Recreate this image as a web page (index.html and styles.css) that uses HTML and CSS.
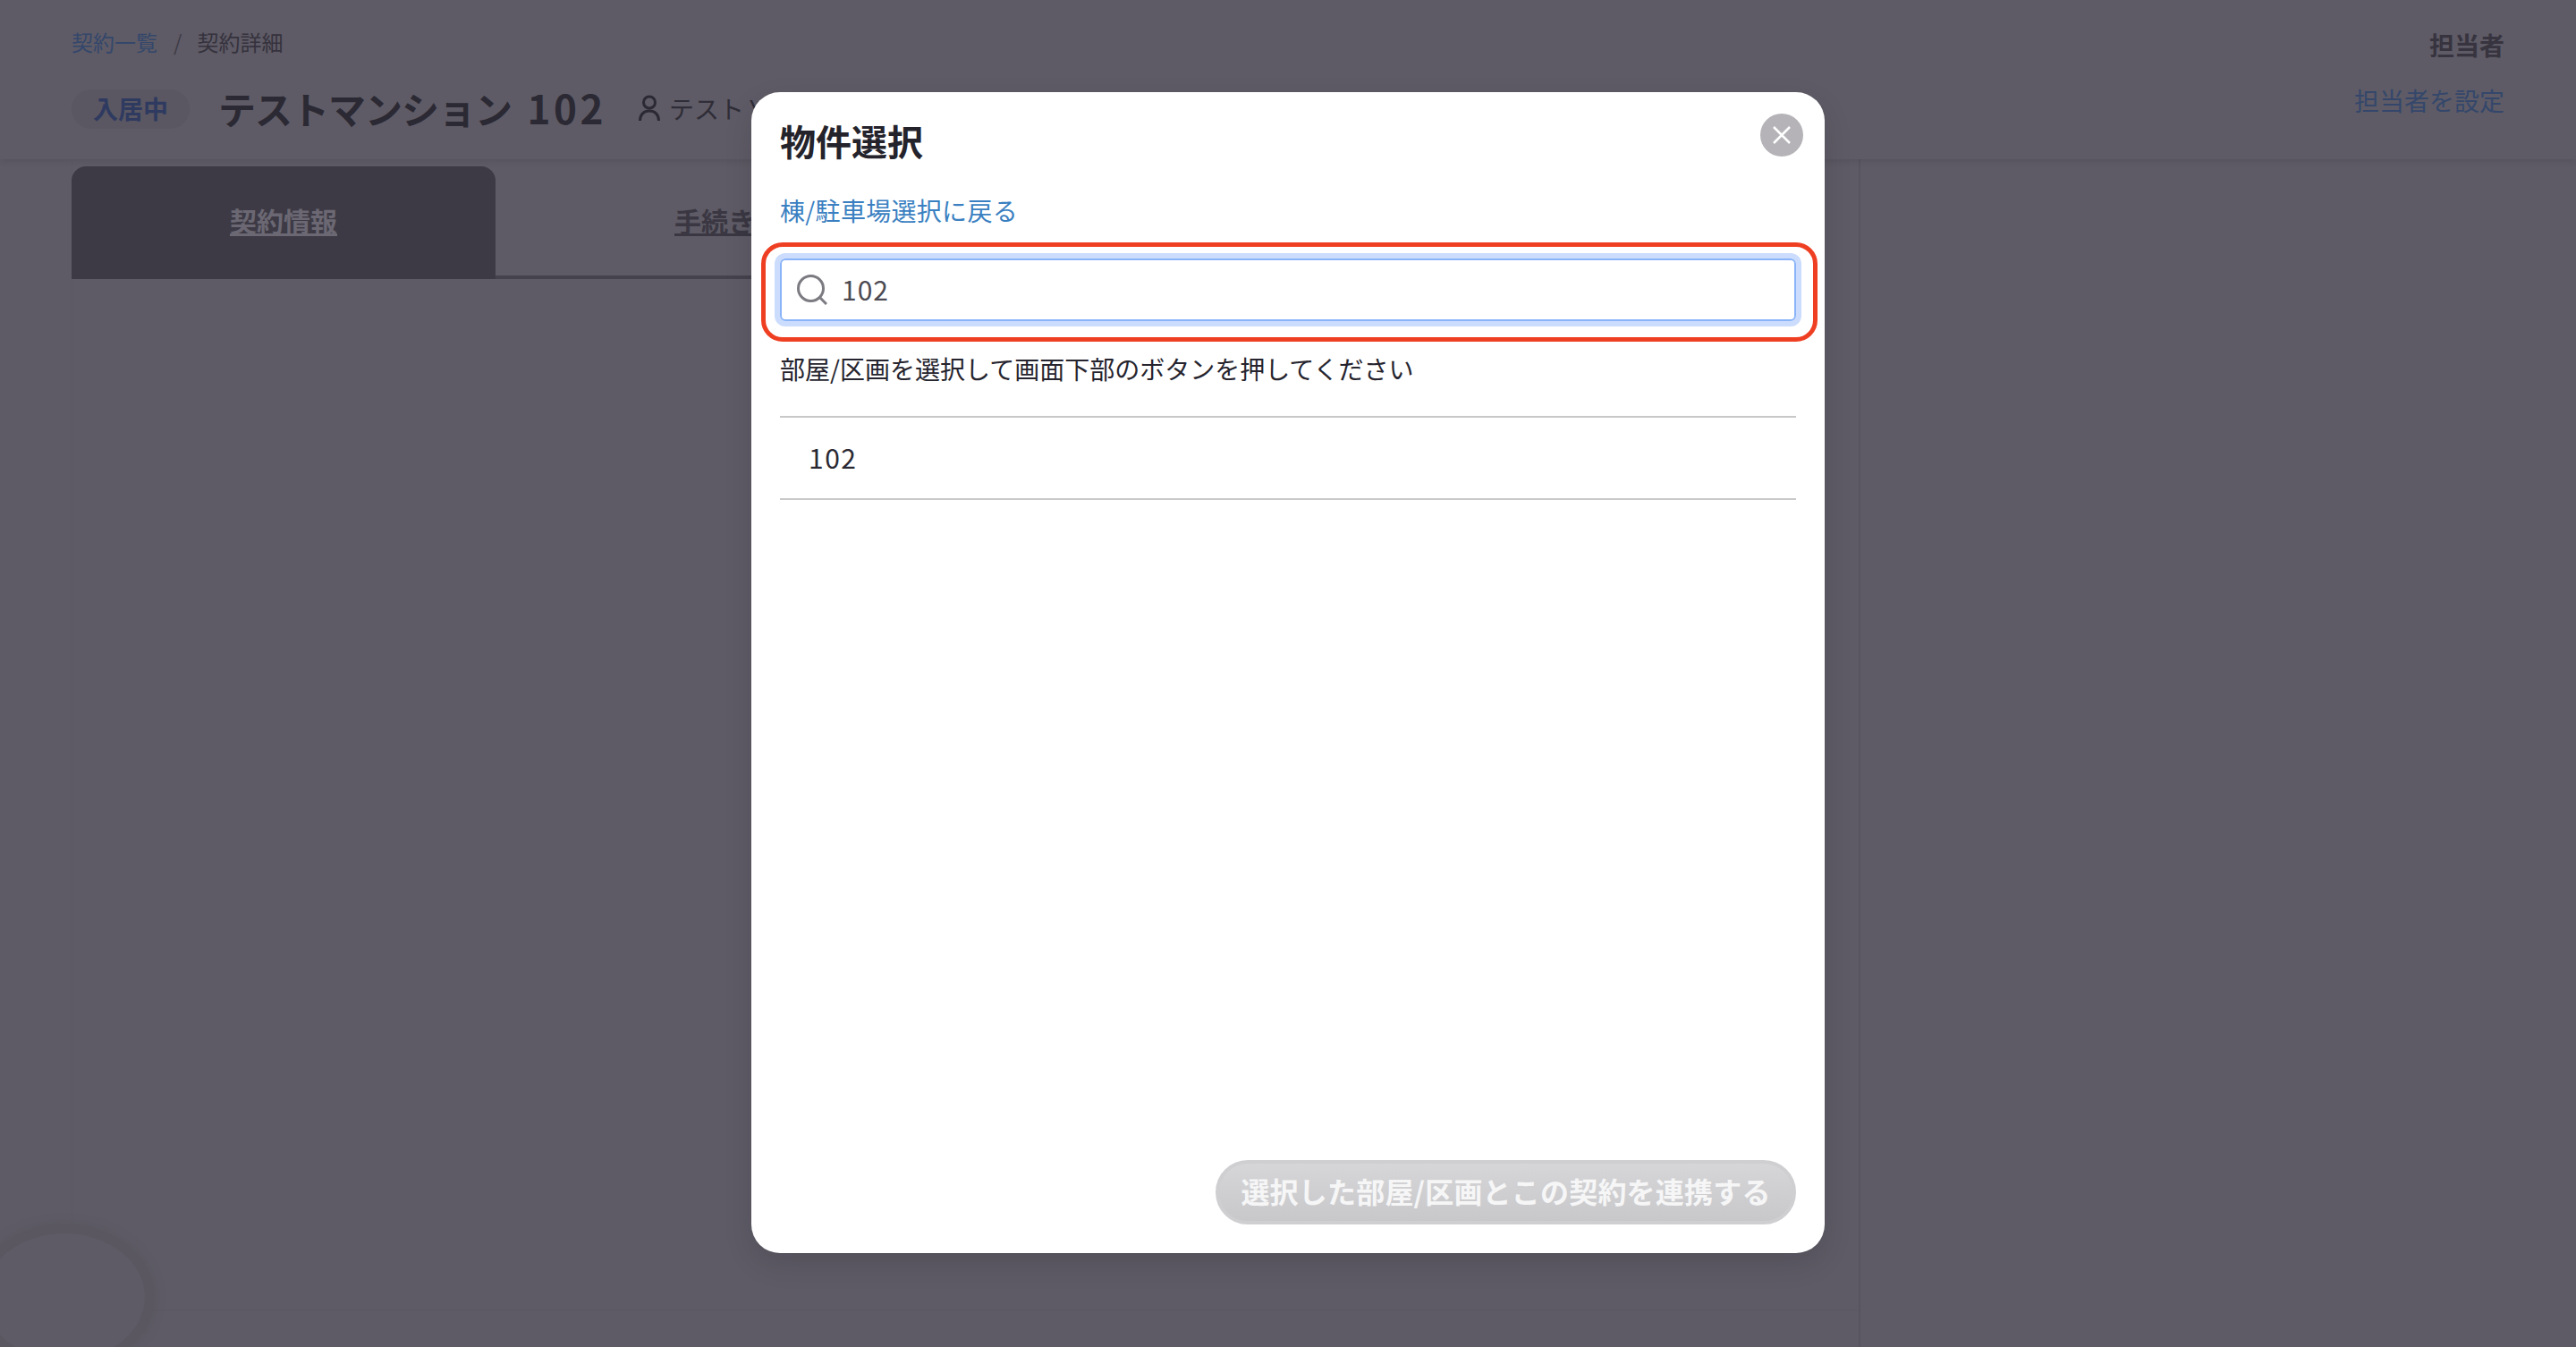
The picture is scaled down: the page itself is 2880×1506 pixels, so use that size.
FILE: index.html
```html
<!DOCTYPE html>
<html lang="ja">
<head>
<meta charset="utf-8">
<title>物件選択</title>
<link rel="stylesheet" href="styles.css">
</head>
<body>
<div class="page">
  <header class="head">
    <div class="head-main">
      <nav class="crumbs"><a class="crumb-link">契約一覧</a><span class="crumb-sep">/</span><span>契約詳細</span></nav>
      <div class="title-row">
        <span class="badge">入居中</span>
        <h1 class="title">テストマンション <span class="title-num">102</span></h1>
        <span class="tenant">
          <svg class="tenant-icon" viewBox="0 0 24 30" aria-hidden="true"><circle cx="12" cy="8.5" r="6.5"/><path d="M1.5 29c0-7 4.5-11 10.500-11s10.500 4 10.500 11"/></svg>
          テスト Y
        </span>
      </div>
    </div>
    <div class="assignee">
      <strong class="assignee-label">担当者</strong>
      <a class="assignee-link">担当者を設定</a>
    </div>
  </header>
  <div class="body">
    <div class="panel">
      <div class="tabs">
        <a class="tab tab-active">契約情報</a>
        <a class="tab">手続き</a>
      </div>
      <div class="panel-fill"></div>
    </div>
  </div>
  <div class="fab"></div>
</div>

<section class="modal">
  <button class="close" aria-label="閉じる">
    <svg viewBox="0 0 20 20" aria-hidden="true"><path d="M1 1l18 18M19 1L1 19"/></svg>
  </button>
  <h2 class="modal-title">物件選択</h2>
  <a class="back">棟/駐車場選択に戻る</a>
  <div class="search">
    <svg class="search-icon" viewBox="0 0 34 34" aria-hidden="true"><circle cx="15.500" cy="15.500" r="14"/><path d="M25.500 25.500L33 33"/></svg>
    <span class="search-value">102</span>
    <span class="highlight"></span>
  </div>
  <p class="hint">部屋/区画を選択して画面下部のボタンを押してください</p>
  <ul class="rooms"><li class="room">102</li></ul>
  <button class="submit">選択した部屋/区画とこの契約を連携する</button>
</section>
</body>
</html>
```

FILE: styles.css
```css
* { box-sizing: border-box; }
html, body { margin: 0; height: 100%; }
body {
  width: 2880px;
  height: 1506px;
  overflow: hidden;
  background: #5e5b66;
  color: #26242e;
  font-family: "Noto Sans CJK JP", "Noto Sans", sans-serif;
  position: relative;
}
.page { display: flex; flex-direction: column; height: 1506px; position: relative; }
.head {
  height: 178px;
  padding: 0 80px;
  display: flex;
  justify-content: space-between;
  box-shadow: 0 3px 6px rgba(40, 38, 46, .12);
  position: relative;
  z-index: 1;
}
.crumbs {
  display: flex;
  align-items: center;
  height: 36px;
  margin-top: 29px;
  font-size: 24px;
  line-height: 36px;
  color: #35323d;
}
.crumb-link { color: #34476b; }
.crumb-sep { margin: 0 17px 0 18px; color: #3f3c47; }
.title-row { display: flex; align-items: center; height: 44px; margin-top: 35px; }
.badge {
  width: 132px;
  height: 44px;
  border-radius: 22px;
  background: #5a5762;
  color: #2f3a60;
  font-size: 28px;
  font-weight: 700;
  line-height: 42px;
  text-align: center;
}
.title {
  margin: 0 0 0 32px;
  padding-bottom: 3px;
  font-size: 42px;
  font-weight: 700;
  line-height: 41px;
  color: #2b2933;
  letter-spacing: -1px;
  white-space: nowrap;
}
.title-num { margin-left: 9px; font-size: 44px; letter-spacing: 3.5px; }
.tenant {
  display: flex;
  align-items: center;
  margin-left: 36px;
  padding-bottom: 2px;
  font-size: 28px;
  color: #2f2d37;
  white-space: nowrap;
}
.tenant-icon {
  width: 24px;
  height: 30px;
  margin-right: 10px;
  fill: none;
  stroke: #2b2933;
  stroke-width: 3;
}
.assignee { display: flex; flex-direction: column; align-items: flex-end; padding-top: 30px; font-size: 28px; line-height: 40px; }
.assignee-label { color: #37343f; font-weight: 700; }
.assignee-link { margin-top: 22px; color: #34476b; }
.body { flex: 1; display: flex; padding-left: 80px; }
.panel {
  width: 2000px;
  display: flex;
  flex-direction: column;
  padding-top: 8px;
  border-left: 1px solid #5c5964;
  border-right: 2px solid #57545f;
}
.tabs {
  display: flex;
  gap: 8px;
  width: 1500px;
  height: 126px;
  border-bottom: 4px solid #45424d;
  margin-left: -1px;
}
.tab {
  width: 474px;
  height: 122px;
  display: flex;
  align-items: center;
  justify-content: center;
  border-radius: 16px 16px 0 0;
  padding-bottom: 3px;
  font-size: 30px;
  font-weight: 700;
  text-decoration: underline;
  color: #3a3742;
}
.tab-active { height: 126px; background: #3d3a45; color: #6b6873; padding-bottom: 7px; }
.panel-fill {
  height: 1154px;
  flex: none;
  border-bottom: 2px solid #5c5964;
}
.fab {
  position: absolute;
  left: -18px;
  top: 1379px;
  width: 180px;
  height: 142px;
  border-radius: 50%;
  background: #5e5b66;
  box-shadow: 0 0 0 10px #5a5760, 0 0 10px 12px rgba(86, 83, 90, .5);
}
.modal {
  position: absolute;
  z-index: 2;
  left: 840px;
  top: 103px;
  width: 1200px;
  height: 1298px;
  padding: 24px 32px 32px;
  display: flex;
  flex-direction: column;
  background: #fff;
  border-radius: 32px;
  box-shadow: 0 12px 32px rgba(0, 0, 0, .12);
}
.close {
  position: absolute;
  right: 24px;
  top: 24px;
  width: 48px;
  height: 48px;
  padding: 14px;
  border: 0;
  border-radius: 50%;
  background: #b5b3b8;
  display: flex;
}
.close svg { width: 20px; height: 20px; fill: none; stroke: #fff; stroke-width: 2.500; }
.modal-title { margin: 0; font-size: 40px; font-weight: 700; line-height: 60px; color: #24232b; }
.back { margin-top: 28px; font-size: 28px; line-height: 40px; color: #3a7fc1; letter-spacing: .3px; }
.search {
  position: relative;
  height: 70px;
  margin-top: 34px;
  display: flex;
  align-items: center;
  padding-left: 17px;
  border: 2px solid #8ab4f8;
  border-radius: 6px;
  box-shadow: 0 0 0 6px #cbdcfd;
}
.search-icon { width: 34px; height: 34px; fill: none; stroke: #7d7b82; stroke-width: 3; }
.search-value { margin-left: 16px; padding-bottom: 3px; font-size: 30px; line-height: 40px; color: #4c4a52; letter-spacing: 1px; }
.highlight {
  position: absolute;
  left: -23px;
  right: -26px;
  top: -20px;
  bottom: -25px;
  border: 5px solid #ef3f23;
  border-radius: 24px;
}
.hint { margin: 33px 0 0; font-size: 28px; line-height: 40px; color: #26242e; }
.rooms { list-style: none; margin: 33px 0 0; padding: 0; border-top: 2px solid #c8c8c8; }
.room {
  height: 92px;
  padding-left: 32px;
  border-bottom: 2px solid #c8c8c8;
  font-size: 30px;
  line-height: 88px;
  color: #2b2933;
  letter-spacing: 1.500px;
}
.submit {
  margin-top: auto;
  align-self: flex-end;
  width: 649px;
  height: 72px;
  padding: 0 0 4px;
  border: 4px solid #cfcfd2;
  border-radius: 36px;
  background: linear-gradient(#d6d6d8, #c8c8cb);
  color: #f6f6f7;
  font-family: inherit;
  font-size: 32px;
  font-weight: 700;
  line-height: 56px;
  letter-spacing: .2px;
}
```
